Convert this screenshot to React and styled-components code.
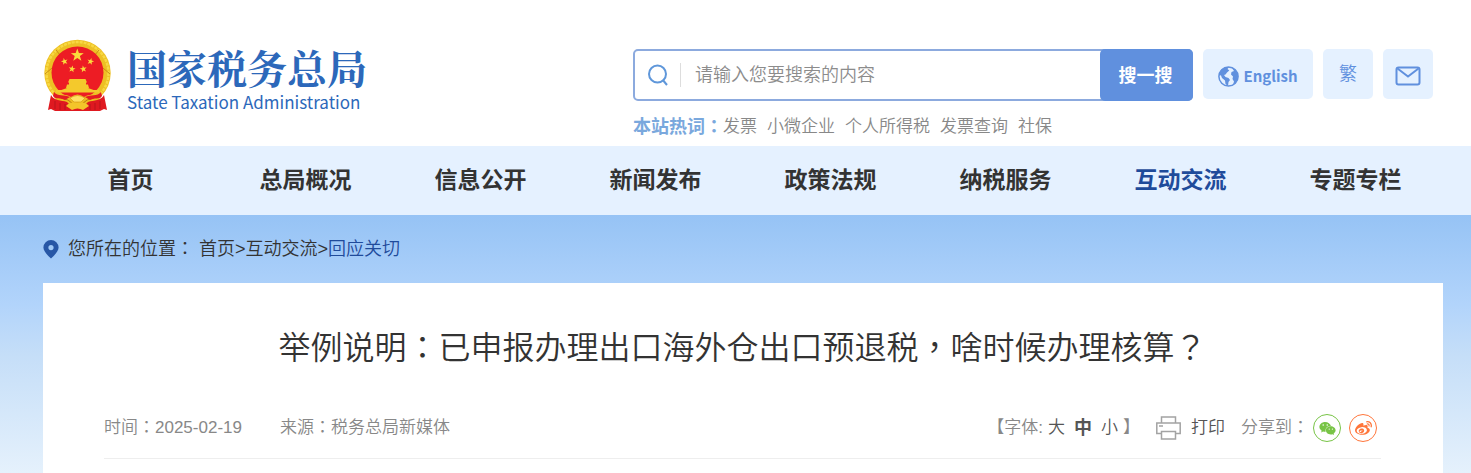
import React from "react";
import styled, { createGlobalStyle } from "styled-components";
import { FaWeixin, FaWeibo } from "react-icons/fa";

const GlobalStyle = createGlobalStyle`
  *, *::before, *::after { box-sizing: border-box; }
  body {
    margin: 0;
    background: #fff;
    color: #333;
    font-family: "Liberation Sans", "Noto Sans CJK SC", sans-serif;
    font-size: 17px;
    line-height: 24px;
    font-weight: 350;
  }
  a { color: inherit; text-decoration: none; }
  button { font: inherit; color: inherit; border: 0; padding: 0; background: none; cursor: pointer; }
  svg { display: block; flex: none; }
`;

/* Full-width punctuation centred in its em box */
const Punct = styled.span.attrs({ lang: "zh-TW" })`
  font-family: "Noto Sans CJK TC", sans-serif;
  line-height: 1;
`;

const Header = styled.header`
  display: flex;
  justify-content: space-between;
  align-items: flex-start;
  height: 146px;
  padding: 0 38px 0 43px;
`;

const Brand = styled.a`
  display: flex;
  align-items: flex-start;
  gap: 15px;
  padding-top: 38px;
  color: #2c68ba;
`;

const BrandText = styled.span`
  display: flex;
  flex-direction: column;
  padding-top: 4px;
`;

const BrandName = styled.span`
  font-family: "Noto Serif CJK SC", "Noto Sans CJK SC", serif;
  font-size: 40px;
  line-height: 50px;
  font-weight: 700;
`;

const BrandLatin = styled.span`
  font-family: "Noto Sans CJK SC", sans-serif;
  font-size: 17px;
  line-height: 20px;
  font-weight: 400;
`;

const Tools = styled.div`
  width: 800px;
  padding-top: 49px;
`;

const ToolRow = styled.div`
  display: flex;
  align-items: flex-start;
  gap: 10px;
`;

const SearchForm = styled.form`
  display: flex;
  align-items: center;
  flex: 1;
  height: 52px;
  padding-left: 13px;
  border: 2px solid #8caade;
  border-radius: 5px;
`;

const SearchInput = styled.input`
  flex: 1;
  min-width: 0;
  height: 24px;
  margin-left: 12px;
  padding: 0 0 0 14px;
  border: 0;
  border-left: 1px solid #ddd;
  outline: 0;
  background: transparent;
  font: inherit;
  font-size: 18px;
  color: #333;
  &::placeholder { color: #8c8c8c; opacity: 1; }
`;

const SearchButton = styled.button`
  width: 93px;
  height: 52px;
  margin-right: -2px;
  padding: 2px 2px 0 0;
  border-radius: 5px;
  background: #6090de;
  color: #fff;
  font-size: 18px;
  font-weight: 700;
`;

const ToolLink = styled.a`
  display: flex;
  align-items: center;
  justify-content: center;
  gap: 4px;
  width: ${(p) => (p.$wide ? 110 : 50)}px;
  height: 50px;
  padding-top: ${(p) => (p.$drawn ? 4 : 0)}px;
  border-radius: 5px;
  background: #e5f1ff;
  color: #6090de;
  font-size: 18px;
`;

const English = styled.span`
  font-family: "Noto Sans CJK SC", sans-serif;
  font-size: 15px;
  font-weight: 700;
`;

const HotWords = styled.div`
  display: flex;
  align-items: center;
  gap: 10px;
  margin-top: 14px;
  color: #888;
`;

const HotLabel = styled.span`
  margin-right: -10px;
  color: #7aa8dd;
  font-size: 18px;
  font-weight: 700;
`;

const Nav = styled.nav`
  display: grid;
  grid-template-columns: repeat(8, 1fr);
  height: 69px;
  padding: 0 28px 0 43px;
  background: #e5f1ff;
`;

const NavLink = styled.a`
  padding-top: 17px;
  text-align: center;
  font-size: 23px;
  line-height: 34px;
  font-weight: 700;
  color: ${(p) => (p.$active ? "#1f4b9b" : "#333")};
`;

const Main = styled.main`
  padding: 0 28px 0 43px;
  background: linear-gradient(#96c3f5 0, #b2d4fb 90px, #c5def8 140px, #e5f1fc 258px);
`;

const Breadcrumb = styled.nav`
  display: flex;
  align-items: center;
  height: 68px;
  font-size: 18px;
`;

const Place = styled.span`
  margin: 0 5px 0 9px;
`;

const Current = styled.a`
  color: #1f4b9b;
`;

const Article = styled.article`
  min-height: 190px;
  padding: 41px 62px 14px 61px;
  background: #fff;
`;

const Title = styled.h1`
  margin: 0;
  text-align: center;
  font-size: 32px;
  line-height: 48px;
  font-weight: 350;
`;

const Meta = styled.div`
  display: flex;
  align-items: center;
  justify-content: space-between;
  margin-top: 42px;
  padding-bottom: 16px;
  border-bottom: 1px solid #eee;
  color: #888;
`;

const MetaGroup = styled.div`
  display: flex;
  align-items: center;
  gap: ${(p) => p.$gap}px;
  padding-right: ${(p) => p.$end || 0}px;
`;

const SizeLabel = styled.div`
  display: flex;
  align-items: center;
  gap: 5px;
`;

const SizeButton = styled.button`
  color: #555;
  font-weight: ${(p) => (p.$active ? 700 : 350)};
  font-size: ${(p) => (p.$active ? 18 : 17)}px;
`;

const PrintButton = styled.button`
  display: flex;
  align-items: center;
  gap: 10px;
  color: #555;
`;

const ShareGroup = styled.div`
  display: flex;
  align-items: center;
  gap: 4px;
`;

const Share = styled.a`
  display: flex;
  align-items: center;
  justify-content: center;
  width: 28px;
  height: 28px;
  border: 1px solid ${(p) => p.$color};
  border-radius: 50%;
  color: ${(p) => p.$color};
`;

const STAR = "M0-10 2.4-3.2 9.5-3.1 3.8 1.2 5.9 8.1 0 4 -5.9 8.1 -3.8 1.2 -9.5-3.1 -2.4-3.2Z";

function Emblem() {
  return (
    <svg width="69" height="74" viewBox="0 0 69 74" aria-hidden="true">
      <circle cx="34.5" cy="35" r="33.2" fill="#edc024" />
      <circle cx="34.5" cy="35" r="31" fill="none" stroke="#f8d943" strokeWidth="2.5" strokeDasharray="3 1" />
      <path d="M2 36 9 30M67 36l-7-6M13 12l4 5M56 12l-4 5" stroke="#c98d14" strokeWidth="1" />
      <circle cx="34.5" cy="34.5" r="26" fill="#ed1c24" />
      <g fill="#fadb3c">
        <path transform="translate(34.3 17.3) scale(.68)" d={STAR} />
        <path transform="translate(21.5 23.5) rotate(-15) scale(.36)" d={STAR} />
        <path transform="translate(47.5 23.5) rotate(15) scale(.36)" d={STAR} />
        <path transform="translate(29 31) rotate(10) scale(.36)" d={STAR} />
        <path transform="translate(40.4 31) rotate(-10) scale(.36)" d={STAR} />
      </g>
      <path d="M26.500 41h16l1.500 3.500H25zM26 44h17v3H26zM24 46.500h21l1 3.500H23zM17 52.500 24 50h21l7 2.500z" fill="#f4c92c" />
      <path d="M13 52h43v2.500H13z" fill="#f4c92c" />
      <path d="M11 59c6-3 12-3 17 0q6.500-5 13 0c5-3 11-3 17 0l-6 8H17z" fill="#eebc20" />
      <path d="M18 60q8 1 12 6M51 60q-8 1-12 6" stroke="#b97812" strokeWidth="1" fill="none" />
      <path d="M27 60q7.500-5 15 0l-4 4h-7z" fill="#ffe063" stroke="#d79c1b" strokeWidth=".7" />
      <path d="M11 54c4 5 10 2 16 5l-5 3c-5-3-9 0-12-4zM58 54c-4 5-10 2-16 5l5 3c5-3 9 0 12-4z" fill="#e31b23" />
      <path d="M8 57c3 6 10 5 16 7l4 4h13l4-4c6-2 13-1 16-7l3 15-3-1-4 2H12l-4-2-3 1z" fill="#df1920" />
      <path d="M12 63v8M17 65v7M22 66v6M57 63v8M52 65v7M47 66v6" stroke="#b9141b" strokeWidth="1" />
      <path d="M23 68q4-5 11.500-3 7.500-2 11.500 3l-6 4q-5.500-3-11 0z" fill="#f3c52a" />
    </svg>
  );
}

function SearchIcon() {
  return (
    <svg width="20" height="22" viewBox="0 0 20 22" fill="none" stroke="#5f97da" strokeWidth="2" aria-hidden="true">
      <circle cx="9.500" cy="10" r="8.500" />
      <path d="m14.800 16 4.200 5" />
    </svg>
  );
}

function GlobeIcon() {
  return (
    <svg width="21" height="21" viewBox="0 0 21 21" fill="#6090de" aria-hidden="true">
      <circle cx="10.500" cy="10.500" r="9.600" fill="none" stroke="#6090de" strokeWidth="1.500" />
      <path d="M1 9C1.500 4 5.500.8 11 1L9.500 3l1.800 1.500L9 6.500 7.500 8.500 6 9l1.500 2 3 1 1.500 2-1.500 2-.5 4-2.500-2L7 14.500 4 12 3 9.500z" />
      <path d="M14 2c3.500 1.500 6 4.500 6 8.500s-2 7-5 8.500l1-3.500-1.500-2.500.5-2.500-2-2 .5-2.500L16 5z" />
    </svg>
  );
}

function MailIcon() {
  return (
    <svg width="26" height="20" viewBox="0 0 26 20" fill="none" stroke="#6090de" strokeWidth="2" aria-hidden="true">
      <rect x="1.500" y="1.500" width="23" height="17" rx="2" />
      <path d="m2.500 2.500 10.500 8 10.500-8" />
    </svg>
  );
}

function PinIcon() {
  return (
    <svg width="16" height="19" viewBox="0 0 16 19" aria-hidden="true">
      <path
        fill="#2757a6"
        fillRule="evenodd"
        d="M8 0a7.600 7.600 0 0 0-7.600 7.600C.4 11 4 15 8 18.500 12 15 15.600 11 15.600 7.600A7.600 7.600 0 0 0 8 0Zm0 5a2.600 2.600 0 1 1 0 5.200A2.600 2.600 0 0 1 8 5Z"
      />
    </svg>
  );
}

function PrintIcon() {
  return (
    <svg width="25" height="24" viewBox="0 0 25 24" fill="none" stroke="#a3a3a3" strokeWidth="1.500" aria-hidden="true">
      <path d="M5.500 7V1h14v6M5.500 17.500H.8V7h23.400v10.500h-4.700M3 10h4" />
      <path d="M5.500 15.500h14v7.500h-14z" />
    </svg>
  );
}

const NAV_ITEMS = ["首页", "总局概况", "信息公开", "新闻发布", "政策法规", "纳税服务", "互动交流", "专题专栏"];
const HOT_WORDS = ["发票", "小微企业", "个人所得税", "发票查询", "社保"];

export default function App() {
  return (
    <div lang="zh-CN">
      <GlobalStyle />
      <Header>
        <Brand href="#">
          <Emblem />
          <BrandText>
            <BrandName>国家税务总局</BrandName>
            <BrandLatin>State Taxation Administration</BrandLatin>
          </BrandText>
        </Brand>
        <Tools>
          <ToolRow>
            <SearchForm role="search" onSubmit={(e) => e.preventDefault()}>
              <SearchIcon />
              <SearchInput type="text" aria-label="搜索" placeholder="请输入您要搜索的内容" />
              <SearchButton type="submit">搜一搜</SearchButton>
            </SearchForm>
            <ToolLink href="#" $wide $drawn>
              <GlobeIcon />
              <English>English</English>
            </ToolLink>
            <ToolLink href="#">繁</ToolLink>
            <ToolLink href="#" aria-label="邮箱" $drawn>
              <MailIcon />
            </ToolLink>
          </ToolRow>
          <HotWords>
            <HotLabel>本站热词<Punct>：</Punct></HotLabel>
            {HOT_WORDS.map((word) => (
              <a href="#" key={word}>{word}</a>
            ))}
          </HotWords>
        </Tools>
      </Header>
      <Nav>
        {NAV_ITEMS.map((item) => (
          <NavLink href="#" key={item} $active={item === "互动交流"}>{item}</NavLink>
        ))}
      </Nav>
      <Main>
        <Breadcrumb>
          <PinIcon />
          <Place>您所在的位置<Punct>：</Punct></Place>
          <a href="#">首页</a>&gt;<a href="#">互动交流</a>&gt;<Current href="#">回应关切</Current>
        </Breadcrumb>
        <Article>
          <Title>
            举例说明<Punct>：</Punct>已申报办理出口海外仓出口预退税<Punct>，</Punct>啥时候办理核算<Punct>？</Punct>
          </Title>
          <Meta>
            <MetaGroup $gap={38}>
              <span>时间<Punct>：</Punct>2025-02-19</span>
              <span>来源<Punct>：</Punct>税务总局新媒体</span>
            </MetaGroup>
            <MetaGroup $gap={16} $end={4}>
              <SizeLabel>
                <span>【字体:</span>
                <MetaGroup $gap={9}>
                  <SizeButton type="button">大</SizeButton>
                  <SizeButton type="button" $active>中</SizeButton>
                  <SizeButton type="button">小</SizeButton>
                </MetaGroup>
                <span>】</span>
              </SizeLabel>
              <PrintButton type="button">
                <PrintIcon />
                打印
              </PrintButton>
              <ShareGroup>
                <span>分享到<Punct>：</Punct></span>
                <MetaGroup $gap={8}>
                  <Share href="#" aria-label="微信" $color="#78c446">
                    <FaWeixin size={17} />
                  </Share>
                  <Share href="#" aria-label="微博" $color="#ff763b">
                    <FaWeibo size={17} />
                  </Share>
                </MetaGroup>
              </ShareGroup>
            </MetaGroup>
          </Meta>
        </Article>
      </Main>
    </div>
  );
}
